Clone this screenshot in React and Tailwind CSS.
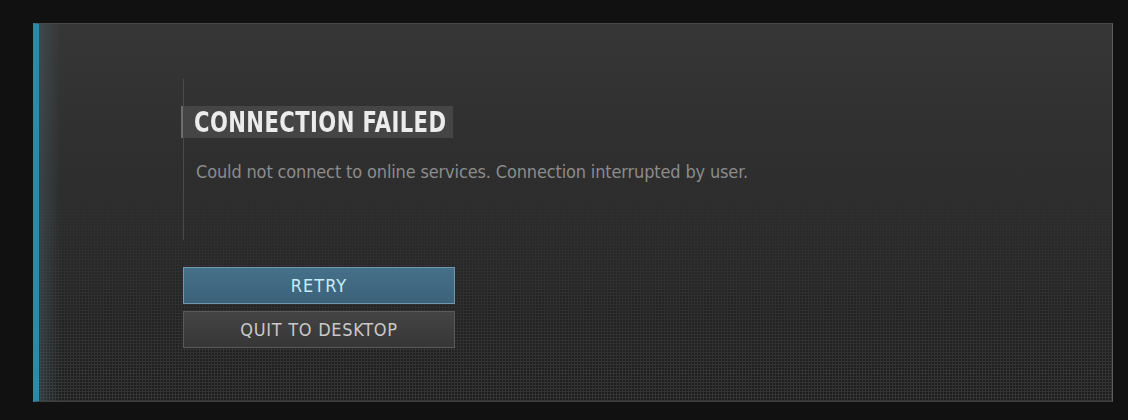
import React from 'react';

const App = () => {
  return (
    <div className="w-[1128px] h-[420px] bg-[#111111] pt-[23px] pl-[33px] pr-[15px] pb-[18px]" style={{ fontFamily: '"DejaVu Sans Condensed", "DejaVu Sans", sans-serif' }}>
      <div className="relative h-full border-l-[6px] border-l-[#2b8aa6] border-t border-t-[#4a4a4a] border-r border-r-[#5e5e5e] border-b border-b-[#3e3e3e] bg-[linear-gradient(180deg,#363636_0%,#2d2d2d_45%,#232323_75%,#1d1d1d_100%)] overflow-hidden">
        {/* dot texture in the lower half */}
        <div className="absolute inset-0 bg-[radial-gradient(circle,rgba(255,255,255,0.1)_1px,transparent_1.3px)] bg-[length:3px_3px] [mask-image:linear-gradient(180deg,transparent_40%,black_100%)]" />
        {/* left glow */}
        <div className="absolute left-0 top-0 bottom-0 w-[22px] bg-[linear-gradient(90deg,rgba(80,110,120,0.35),transparent)]" />

        <div className="relative pl-[144px] pt-[55px]">
          <div className="border-l border-l-[#4a4a4a] h-[161px] pt-[27px]">
            <h1 className="-ml-[3px] flex items-center w-[272px] h-[32px] bg-[#454545] border-l-2 border-l-[#6e6e6e] pl-[11px] text-[29px] font-bold text-[#ececec] leading-none">
              <span className="inline-block origin-left scale-x-[0.81] whitespace-nowrap tracking-[0.5px]">CONNECTION FAILED</span>
            </h1>
            <p className="mt-[25px] ml-[12px] text-[18px] text-[#8c8c8c] leading-none tracking-[-0.15px]">
              Could not connect to online services. Connection interrupted by user.
            </p>
          </div>

          <div className="mt-[27px] w-[272px] flex flex-col gap-[7px]">
            <button className="h-[37px] bg-[linear-gradient(180deg,#46708a,#3b6279)] border border-[#6f98ad] text-[#c6ecf7] text-[18px] tracking-[1px]">
              RETRY
            </button>
            <button className="h-[37px] bg-[linear-gradient(180deg,#444444,#363636)] border border-[#5a5a5a] text-[#c9c9c9] text-[18px] tracking-[0.7px]">
              QUIT TO DESKTOP
            </button>
          </div>
        </div>
      </div>
    </div>
  );
};

export default App;
